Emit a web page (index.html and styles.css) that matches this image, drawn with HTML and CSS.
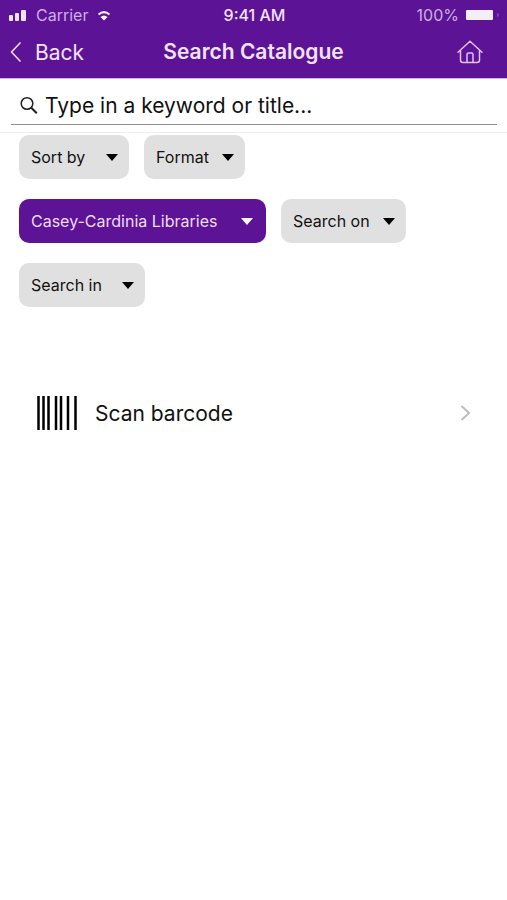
FILE: index.html
```html
<!DOCTYPE html>
<html lang="en">
<head>
<meta charset="utf-8">
<meta name="viewport" content="width=device-width, initial-scale=1">
<title>Search Catalogue</title>
<link rel="stylesheet" href="styles.css">
</head>
<body>
<header class="header">
  <div class="status">
    <div class="status-side">
      <svg class="signal" viewBox="0 0 18 12" aria-hidden="true"><rect x="0" y="6" width="4" height="6" rx="1"/><rect x="6" y="4" width="4" height="8" rx="1"/><rect x="12" y="1" width="5" height="11" rx="1"/></svg>
      <span>Carrier</span>
      <svg class="wifi" viewBox="0 0 14 12" aria-hidden="true"><path d="M1.500 5.500Q7 .7 12.500 5.500" fill="none" stroke="currentColor" stroke-width="2"/><path d="M3.500 8Q7 5 10.500 8L7 11.500Z"/></svg>
    </div>
    <span class="time">9:41 AM</span>
    <div class="status-side status-end">
      <span>100%</span>
      <svg class="battery" viewBox="0 0 34 12" aria-hidden="true"><rect x="0" y="1" width="27" height="10" rx="1"/><path d="M31 4Q33 4.500 33 6T31 8Z" opacity=".25"/></svg>
    </div>
  </div>
  <nav class="navbar">
    <a class="back" href="#">
      <svg class="back-icon" viewBox="0 0 12 22" aria-hidden="true"><path d="M10.500 1.500 1.500 11l9 9.500"/></svg>
      <span>Back</span>
    </a>
    <h1 class="title">Search Catalogue</h1>
    <a class="home" href="#" aria-label="Home">
      <svg class="home-icon" viewBox="0 0 26 24" aria-hidden="true"><path d="M1 12.200 13 1.300 25 12.200M3.500 10.500V20Q3.500 22.500 6 22.500H20Q22.500 22.500 22.500 20V10.500M10 22.500V14.500Q10 13 11.500 13H14.500Q16 13 16 14.500V22.500"/></svg>
    </a>
  </nav>
</header>
<main>
  <form class="search" role="search">
    <label class="field">
      <svg class="search-icon" viewBox="0 0 18 18" aria-hidden="true"><circle cx="7" cy="7.500" r="5.800"/><path d="m11.300 11.800 5.500 5.500" stroke-width="2"/></svg>
      <input class="input" type="search" placeholder="Type in a keyword or title..." aria-label="Search the catalogue">
    </label>
  </form>
  <div class="filters">
    <div class="chip chip-wide">
      <select class="select" aria-label="Sort by"><option>Sort by</option></select>
      <svg class="caret" viewBox="0 0 12 7" aria-hidden="true"><path d="M0 0H12L6 7Z"/></svg>
    </div>
    <div class="chip">
      <select class="select" aria-label="Format"><option>Format</option></select>
      <svg class="caret" viewBox="0 0 12 7" aria-hidden="true"><path d="M0 0H12L6 7Z"/></svg>
    </div>
    <div class="chip chip-active">
      <select class="select" aria-label="Library"><option>Casey-Cardinia Libraries</option></select>
      <svg class="caret" viewBox="0 0 12 7" aria-hidden="true"><path d="M0 0H12L6 7Z"/></svg>
    </div>
    <div class="chip">
      <select class="select" aria-label="Search on"><option>Search on</option></select>
      <svg class="caret" viewBox="0 0 12 7" aria-hidden="true"><path d="M0 0H12L6 7Z"/></svg>
    </div>
    <div class="chip chip-wide">
      <select class="select" aria-label="Search in"><option>Search in</option></select>
      <svg class="caret" viewBox="0 0 12 7" aria-hidden="true"><path d="M0 0H12L6 7Z"/></svg>
    </div>
  </div>
  <a class="scan" href="#">
    <svg class="barcode" viewBox="0 0 40 34" aria-hidden="true"><path d="M1.500 0V34M6.500 0V34M11.500 0V34M19 0V34M24 0V34M31 0V34M38.500 0V34"/></svg>
    <span class="scan-label">Scan barcode</span>
    <svg class="chevron" viewBox="0 0 11 16" aria-hidden="true"><path d="m1.500 1 7.500 7-7.500 7"/></svg>
  </a>
</main>
</body>
</html>
```
FILE: styles.css
```css
* { box-sizing: border-box; }

body {
  margin: 0;
  background: #fff;
  color: #111;
  font-family: Inter, "Liberation Sans", sans-serif;
}

a { color: inherit; text-decoration: none; }
svg { display: block; flex: none; }

.header {
  background: #5c1396;
  color: #f2e3fc;
  border-bottom: 1px solid #d3b5ea;
}

.status {
  display: grid;
  grid-template-columns: 1fr auto 1fr;
  align-items: center;
  height: 30px;
  padding: 0 7px 0 9px;
  font-size: 16px;
}
.status-side {
  display: flex;
  align-items: center;
  gap: 9px;
  color: #cdaee6;
}
.status-end { justify-content: flex-end; gap: 7px; }
.time { font-weight: 500; }
.signal { width: 18px; height: 12px; fill: #f2e3fc; }
.wifi { width: 14px; height: 12px; fill: currentColor; color: #f8f0fd; }
.battery { width: 34px; height: 12px; fill: #f4eff7; }

.navbar {
  display: grid;
  grid-template-columns: 1fr auto 1fr;
  align-items: center;
  height: 48px;
  padding: 0 10px 4px;
}
.back {
  display: flex;
  align-items: center;
  gap: 13px;
  font-size: 21px;
}
.back-icon {
  width: 12px;
  height: 22px;
  fill: none;
  stroke: currentColor;
  stroke-width: 1.5;
}
.title { margin: 0; font-size: 21px; font-weight: 600; line-height: 26px; }
.home { justify-self: end; margin-right: 14px; }
.home-icon {
  width: 26px;
  height: 24px;
  fill: none;
  stroke: #e0c2f5;
  stroke-width: 1.5;
  stroke-linecap: round;
  stroke-linejoin: round;
}

.search {
  padding: 7px 10px 7px 11px;
  border-bottom: 1px solid #eee;
}
.field {
  display: flex;
  align-items: center;
  gap: 7px;
  padding-left: 9px;
  border-bottom: 1px solid #929292;
}
.search-icon {
  width: 18px;
  height: 18px;
  fill: none;
  stroke: #222;
  stroke-width: 1.5;
}
.input {
  flex: 1;
  min-width: 0;
  height: 38px;
  padding: 0;
  border: 0;
  outline: 0;
  background: none;
  color: inherit;
  font: inherit;
  font-size: 21px;
}
.input::placeholder { color: #111; opacity: 1; }

.filters {
  display: flex;
  flex-wrap: wrap;
  gap: 20px 15px;
  padding: 2px 19px;
}
.chip {
  position: relative;
  border-radius: 10px;
  background: #e0e0e0;
}
.select {
  appearance: none;
  display: block;
  height: 44px;
  margin: 0;
  padding: 0 36px 0 12px;
  border: 0;
  background: none;
  color: inherit;
  font: inherit;
  font-size: 16px;
}
.chip-wide .select { padding-right: 43px; }
.chip-active { background: #5c1396; color: #f0dcfb; }
.chip-active .select { padding-right: 48px; }
.caret {
  position: absolute;
  top: 19px;
  right: 11px;
  width: 12px;
  height: 7px;
  fill: #000;
  pointer-events: none;
}
.chip-active .caret { right: 13px; fill: #fff; }

.scan {
  display: flex;
  align-items: center;
  gap: 18px;
  margin-top: 60px;
  padding: 20px 36px 20px 37px;
  min-height: 88px;
}
.barcode {
  width: 40px;
  height: 34px;
  fill: none;
  stroke: #000;
  stroke-width: 2.5;
}
.scan-label { flex: 1; font-size: 21px; }
.chevron {
  width: 11px;
  height: 16px;
  fill: none;
  stroke: #bdbdbd;
  stroke-width: 2;
}
```
